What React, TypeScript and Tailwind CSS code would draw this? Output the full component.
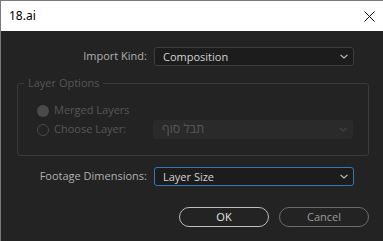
import React from "react";

const Chevron = ({ color = "#b8b8b8" }: { color?: string }) => (
  <svg width="8" height="5" viewBox="0 0 8 5" className="shrink-0">
    <path d="M0.5 0.8 L4 4 L7.5 0.8" fill="none" stroke={color} strokeWidth="1.1" />
  </svg>
);

const Select = ({
  text,
  variant = "normal",
}: {
  text: string;
  variant?: "normal" | "focused" | "disabled";
}) => {
  const cls =
    variant === "focused"
      ? "bg-[#1c1c1c] border-[#3778b4] text-[#d2d2d2] text-[11px]"
      : variant === "disabled"
      ? "bg-[#2a2a2a] border-[#2a2a2a] text-[#575757] text-[12.5px]"
      : "bg-[#1c1c1c] border-[#3d3d3d] text-[#d2d2d2] text-[11px]";
  return (
    <div
      className={`w-[200px] h-[19px] rounded-[3px] border flex items-center justify-between pl-[8px] pr-[5px] leading-none ${cls}`}
    >
      <span>{text}</span>
      <Chevron color={variant === "disabled" ? "#444444" : "#c4c4c4"} />
    </div>
  );
};

export default function App() {
  return (
    <div
      className="w-[383px] h-[241px] flex flex-col border-l border-t border-[#7a7a7a] overflow-hidden"
      style={{ fontFamily: '"Open Sans", "Noto Sans", sans-serif' }}
    >
      <div className="h-[30px] bg-white flex items-center justify-between pl-[8px] pr-[8px] shrink-0">
        <span className="text-[12px] text-black" style={{ fontFamily: '"Noto Sans", sans-serif' }}>
          18.ai
        </span>
        <svg width="11" height="11" viewBox="0 0 11 11">
          <path d="M0.5 0.5 L10.5 10.5 M10.5 0.5 L0.5 10.5" stroke="#111" strokeWidth="1" />
        </svg>
      </div>
      <div className="flex-1 bg-[#232323] flex flex-col">
        <div className="mt-[16px] flex items-center">
          <div className="w-[146px] text-right text-[11px] text-[#b0b0b0]">Import Kind:</div>
          <div className="ml-[7px]">
            <Select text="Composition" />
          </div>
        </div>

        <div className="mt-[17px] ml-[16px] w-[352px] h-[73px] border border-[#3a3a3a] rounded-[3px] relative pt-[17px]">
          <span className="absolute -top-[9px] left-[6px] px-[4px] bg-[#232323] text-[11px] text-[#575757]">
            Layer Options
          </span>
          <div className="h-[19px] flex items-center pl-[19px]">
            <span className="w-[12px] h-[12px] rounded-full bg-[#4a4a4a]" />
            <span className="ml-[5px] text-[11px] text-[#575757]">Merged Layers</span>
          </div>
          <div className="h-[19px] flex items-center pl-[19px]">
            <span className="w-[12px] h-[12px] rounded-full border-[1.5px] border-[#4a4a4a]" />
            <span className="ml-[5px] w-[99px] text-[11px] text-[#575757]">Choose Layer:</span>
            <Select text="תבל סוף" variant="disabled" />
          </div>
        </div>

        <div className="mt-[11px] flex items-center">
          <div className="w-[146px] text-right text-[11px] text-[#b0b0b0]">Footage Dimensions:</div>
          <div className="ml-[7px]">
            <Select text="Layer Size" variant="focused" />
          </div>
        </div>

        <div className="mt-[21px] flex items-center ml-[178px] gap-[10px]">
          <button className="w-[90px] h-[20px] rounded-full border border-[#bdbdbd] text-[11px] text-[#e4e4e4] flex items-center justify-center">
            OK
          </button>
          <button className="w-[90px] h-[20px] rounded-full border border-[#6c6c6c] text-[11px] text-[#9c9c9c] flex items-center justify-center">
            Cancel
          </button>
        </div>
      </div>
    </div>
  );
}
